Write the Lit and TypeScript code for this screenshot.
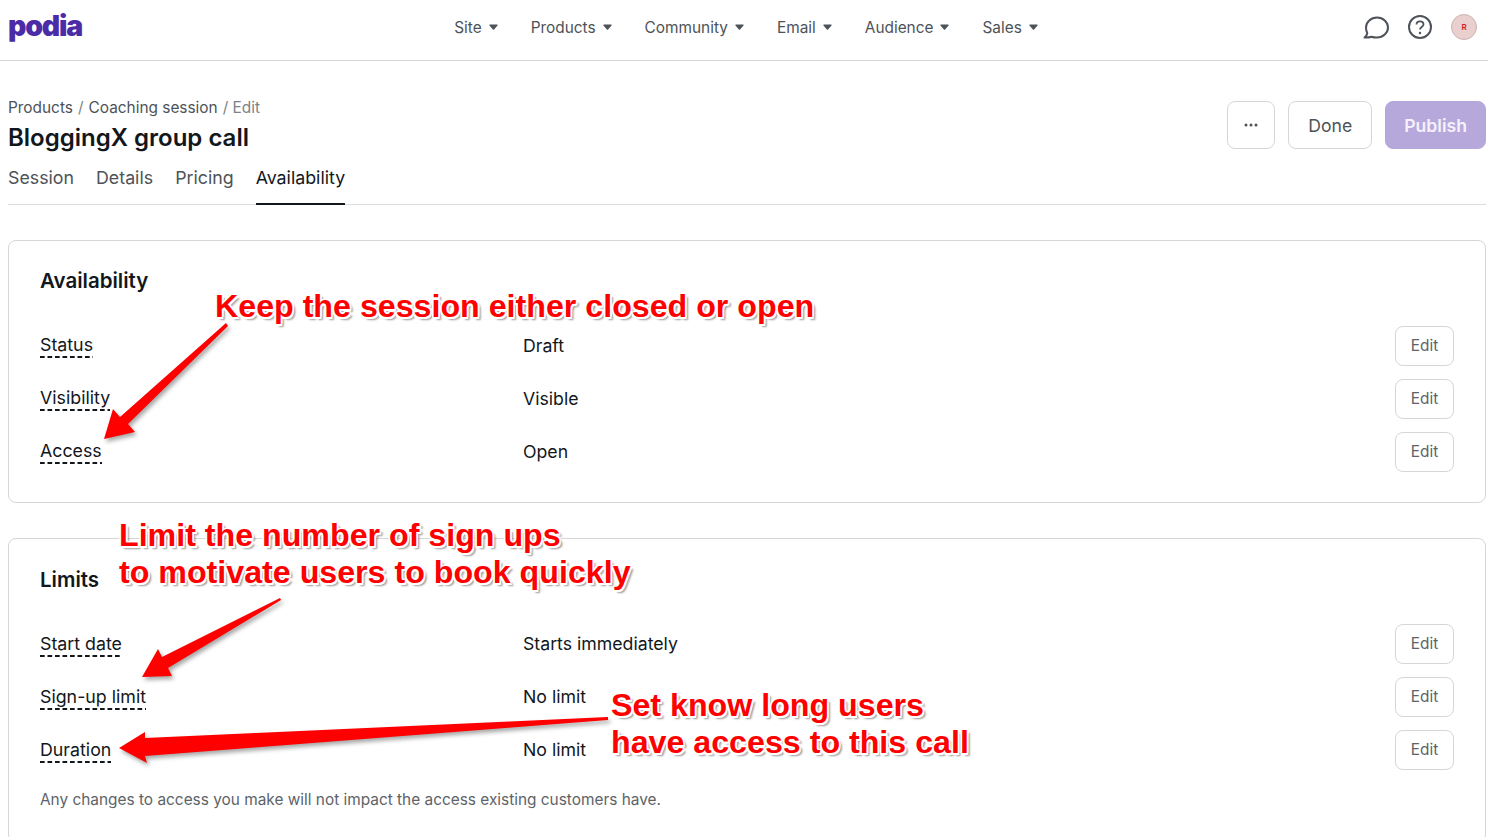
import { LitElement, html, css, svg } from "lit";
import { customElement } from "lit/decorators.js";

const NAV = ["Site", "Products", "Community", "Email", "Audience", "Sales"];
const TABS = ["Session", "Details", "Pricing", "Availability"];

const AVAILABILITY = [
  ["Status", "Draft"],
  ["Visibility", "Visible"],
  ["Access", "Open"],
];
const LIMITS = [
  ["Start date", "Starts immediately"],
  ["Sign-up limit", "No limit"],
  ["Duration", "No limit"],
];

// red callout arrows, points read off the screenshot
const ARROWS = [
  "226,323 228,326 128,424 135,432 104,439 113,409 120,417",
  "280,598 281,600 168,668 172,676 142,677 158,649 162,657",
  "608,717 608,720 145,756 147,763 119,748 145,732 145,738",
];

@customElement("app-root")
export class AppRoot extends LitElement {
  static styles = css`
    :host {
      display: block;
      position: relative;
      height: 837px;
      overflow: hidden;
      background: #fff;
      color: #12171c;
      font-family: Inter, "Liberation Sans", sans-serif;
    }

    .topbar {
      display: grid;
      grid-template-columns: 1fr auto 1fr;
      align-items: center;
      height: 54px;
      padding: 0 11px 6px 8px;
      border-bottom: 1px solid #d6d6d6;
    }
    .logo {
      font-size: 28.5px;
      font-weight: 900;
      letter-spacing: -1.2px;
      line-height: 1;
      color: #4b2ca6;
      margin-top: -1px;
    }
    .nav {
      display: flex;
      gap: 33px;
      margin-left: 7px;
      font-size: 15.4px;
      color: #4d5358;
    }
    .nav-item {
      display: flex;
      align-items: center;
      gap: 7px;
    }
    .caret {
      width: 9px;
      height: 6px;
      display: block;
    }
    .tools {
      display: flex;
      justify-content: flex-end;
      align-items: center;
      gap: 19px;
    }
    .tools svg {
      display: block;
    }
    .avatar {
      width: 26px;
      height: 26px;
      box-sizing: border-box;
      border: 1px solid #c9b4b2;
      border-radius: 50%;
      background: #e9d0ce;
      color: #d3202a;
      font-size: 8px;
      font-weight: 600;
      display: flex;
      align-items: center;
      justify-content: center;
    }

    .page {
      padding: 36px 2px 0 8px;
    }
    .head {
      display: flex;
      justify-content: space-between;
      align-items: flex-start;
    }
    .crumbs {
      font-size: 15.4px;
      line-height: 22px;
      color: #4d5358;
    }
    .crumbs .sep {
      margin: 0 0.7px;
      color: #7d8388;
    }
    h1 {
      margin: 3px 0 0;
      font-size: 24px;
      font-weight: 600;
      line-height: 32px;
    }
    .actions {
      display: flex;
      gap: 13px;
      margin-top: 4px;
    }
    .btn {
      box-sizing: border-box;
      height: 48px;
      border: 1px solid #d6d6d6;
      border-radius: 8px;
      background: #fff;
      color: #4d5358;
      font: 400 17.6px Inter, sans-serif;
      padding: 0 19px;
    }
    .btn.more {
      width: 48px;
      padding: 0;
      display: flex;
      align-items: center;
      justify-content: center;
    }
    .btn.publish {
      background: #b7a8dc;
      border-color: #b7a8dc;
      color: #f4f1fa;
      font-weight: 600;
      padding: 0 18px;
    }

    .tabs {
      display: flex;
      gap: 22px;
      margin-top: 5px;
      border-bottom: 1px solid #dcdcdc;
      font-size: 17.8px;
      color: #4d5358;
    }
    .tab {
      padding: 7px 0 13px;
      line-height: 24px;
      margin-bottom: -1px;
      border-bottom: 2px solid transparent;
    }
    .tab.active {
      color: #12171c;
      border-bottom-color: #12171c;
    }

    .card {
      margin-top: 35px;
      border: 1px solid #d6d6d6;
      border-radius: 8px;
      padding: 24px 31px 30px;
    }
    .card + .card {
      padding-top: 25px;
    }
    .card h2 {
      margin: 0 0 29px;
      font-size: 20.5px;
      font-weight: 600;
      line-height: 32px;
    }
    .card + .card h2 {
      margin-bottom: 28px;
    }
    .rows {
      display: flex;
      flex-direction: column;
      gap: 13px;
    }
    .row {
      display: grid;
      grid-template-columns: 483px 1fr auto;
      align-items: center;
      font-size: 17.7px;
    }
    .value {
      padding-bottom: 2px;
    }
    .term {
      justify-self: start;
      font-size: 17.8px;
      line-height: 22px;
      padding-bottom: 2px;
      background: linear-gradient(to right, #12171c 5px, transparent 5px) left bottom / 7.5px 2px repeat-x;
    }
    .card + .card .term {
      margin-top: 2px;
    }
    .edit {
      box-sizing: border-box;
      width: 59px;
      height: 40px;
      padding: 0 0 2px;
      border: 1px solid #d6d6d6;
      border-radius: 8px;
      background: #fff;
      color: #5d6368;
      font: 400 15.4px Inter, sans-serif;
    }
    .note {
      margin: 19px 0 0;
      font-size: 15.4px;
      line-height: 22px;
      color: #5d6368;
    }

    .callouts {
      position: absolute;
      left: 0;
      top: 0;
      filter: drop-shadow(2px 3px 2px rgba(0, 0, 0, 0.35));
    }
    .callout {
      position: absolute;
      margin: 0;
      font-family: "Liberation Sans", Arial, sans-serif;
      font-size: 32.2px;
      font-weight: 700;
      line-height: 37px;
      color: #fe0000;
      white-space: nowrap;
      text-shadow:
        1.5px 0 0 #fff, -1.5px 0 0 #fff, 0 1.5px 0 #fff, 0 -1.5px 0 #fff,
        1.5px 1.5px 0 #fff, -1.5px 1.5px 0 #fff, 1.5px -1.5px 0 #fff, -1.5px -1.5px 0 #fff,
        3px 3px 2px rgba(0, 0, 0, 0.4);
    }
    .c1 { left: 215px; top: 288px; }
    .c2 { left: 119px; top: 517px; }
    .c3 { left: 611px; top: 687px; }
  `;

  private rows(items: string[][]) {
    return html`<div class="rows">
      ${items.map(
        ([term, value]) => html`<div class="row">
          <span class="term">${term}</span>
          <span class="value">${value}</span>
          <button class="edit">Edit</button>
        </div>`
      )}
    </div>`;
  }

  render() {
    return html`
      <header class="topbar">
        <div class="logo">podia</div>
        <nav class="nav">
          ${NAV.map(
            (n) => html`<span class="nav-item"
              >${n}
              <svg class="caret" viewBox="0 0 9 6">
                <path d="M1 .5h7a.7.7 0 0 1 .5 1.100L5.100 5.400a.8.8 0 0 1-1.200 0L.5 1.600A.7.7 0 0 1 1 .5z" fill="#4d5358" />
              </svg>
            </span>`
          )}
        </nav>
        <div class="tools">
          <svg width="26" height="23" viewBox="0 0 26 23" fill="none" stroke="#4d5358" stroke-width="2">
            <path d="M1.500 21.500c1.500-1 2.500-2.500 2.800-4.500C3.300 15.500 3 13.500 3 11.500 3 6 8 1.500 14 1.500S25 6 25 11.500 20 21.500 14 21.500c-2 0-4-.2-5.500-.8-2 .7-4.500 1-7 .8z" stroke-linejoin="round" />
          </svg>
          <svg width="24" height="24" viewBox="0 0 24 24" fill="none" stroke="#4d5358" stroke-width="2">
            <circle cx="12" cy="12" r="11" />
            <path d="M8.500 9.500c0-2 1.500-3.200 3.500-3.200s3.500 1.200 3.500 3c0 2.700-3.500 2.700-3.500 5.200" stroke-width="1.800" />
            <circle cx="12" cy="18" r="1.200" fill="#4d5358" stroke="none" />
          </svg>
          <div class="avatar">R</div>
        </div>
      </header>

      <main class="page">
        <div class="head">
          <div>
            <div class="crumbs">
              Products <span class="sep">/</span> Coaching session <span class="sep">/ Edit</span>
            </div>
            <h1>BloggingX group call</h1>
          </div>
          <div class="actions">
            <button class="btn more">
              <svg width="16" height="4" viewBox="0 0 16 4" fill="#4d5358">
                <circle cx="3" cy="2" r="1.500" /><circle cx="8" cy="2" r="1.500" /><circle cx="13" cy="2" r="1.500" />
              </svg>
            </button>
            <button class="btn">Done</button>
            <button class="btn publish">Publish</button>
          </div>
        </div>

        <div class="tabs">
          ${TABS.map((t) => html`<span class="tab ${t === "Availability" ? "active" : ""}">${t}</span>`)}
        </div>

        <section class="card">
          <h2>Availability</h2>
          ${this.rows(AVAILABILITY)}
        </section>

        <section class="card">
          <h2>Limits</h2>
          ${this.rows(LIMITS)}
          <p class="note">Any changes to access you make will not impact the access existing customers have.</p>
        </section>
      </main>

      <svg class="callouts" width="1488" height="837">
        ${ARROWS.map((p) => svg`<polygon points=${p} fill="#fe0000" />`)}
      </svg>
      <p class="callout c1">Keep the session either closed or open</p>
      <p class="callout c2">Limit the number of sign ups<br />to motivate users to book quickly</p>
      <p class="callout c3">Set know long users<br />have access to this call</p>
    `;
  }
}
